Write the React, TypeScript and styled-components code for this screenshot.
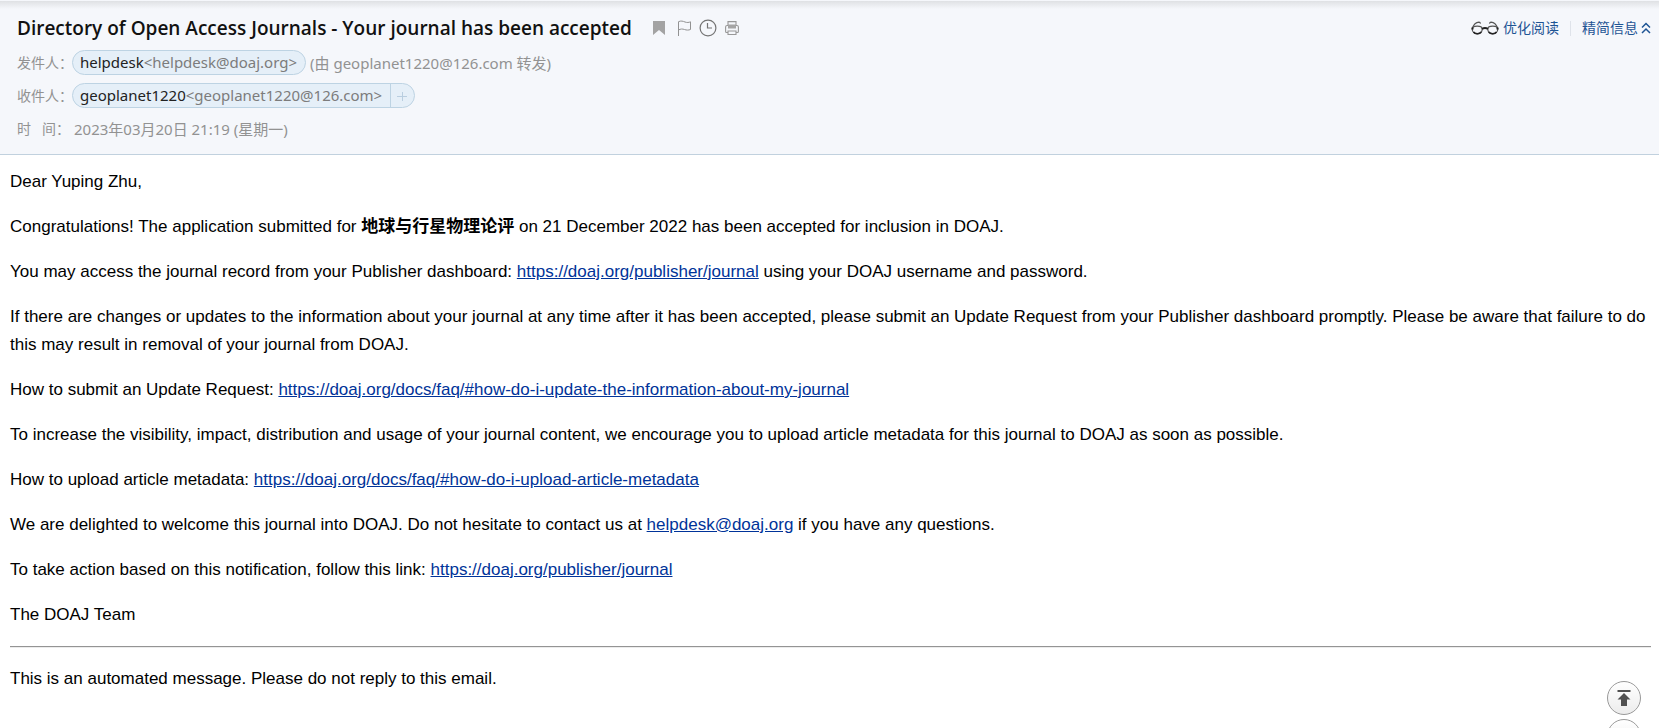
import React from "react";
import styled, { createGlobalStyle } from "styled-components";

const uiFont = `"Noto Sans", "Noto Sans CJK SC", sans-serif`;

const GlobalStyle = createGlobalStyle`
  body {
    margin: 0;
    background: #fff;
    overflow: hidden;
  }
  * {
    box-sizing: border-box;
  }
`;

const Header = styled.header`
  display: flex;
  flex-direction: column;
  align-items: flex-start;
  gap: 8px;
  padding: 15px 8px 13px 17px;
  background: #f5f7fb linear-gradient(#dfe1e4, #f5f7fb) 0 1px / 100% 8px no-repeat;
  border-bottom: 1px solid #c1d1de;
  color: #929292;
  font: 14px/24px ${uiFont};
`;

const TitleBar = styled.div`
  display: flex;
  align-items: center;
  align-self: stretch;
  height: 26px;
  margin-bottom: 1px;
`;

const Subject = styled.h1`
  margin: 0 20px 0 0;
  color: #111;
  font-family: "Open Sans", "Noto Sans CJK SC", sans-serif;
  font-size: 19px;
  font-weight: 600;
  line-height: 24px;
  white-space: nowrap;
`;

const IconButton = styled.button`
  display: flex;
  padding: 0;
  border: 0;
  background: none;
  color: #a3a3a3;
  cursor: pointer;
`;

const Marks = styled.div`
  display: flex;
  align-items: center;
  gap: 7px;
`;

const ViewLinks = styled.nav`
  display: flex;
  align-items: center;
  gap: 11px;
  margin-left: auto;
`;

const ViewLink = styled.a`
  display: flex;
  align-items: center;
  gap: 4px;
  color: #1e5494;
  text-decoration: none;
  white-space: nowrap;
`;

const CollapseLink = styled(ViewLink)`
  gap: 3px;
`;

const Divider = styled.span`
  width: 1px;
  height: 15px;
  background: #dfe3ea;
`;

const Field = styled.div`
  display: flex;
  align-items: center;
  height: 25px;
  font-size: 15px;
  line-height: 22px;
`;

const FieldLabel = styled.span`
  width: 55px;
  font-size: 14px;
  white-space: pre;
`;

const Note = styled.span`
  margin-left: 4px;
`;

const FieldValue = styled.span`
  margin-left: 2px;
`;

const Chip = styled.span`
  display: flex;
  height: 25px;
  overflow: hidden;
  border: 1px solid #bdd3e3;
  border-radius: 13px;
  background: #e5eff8;
  color: #7c7c7c;
`;

const Address = styled.span`
  padding: 0 8px 0 7px;
`;

const Person = styled.span`
  color: #222;
`;

const AddButton = styled.button`
  display: flex;
  align-items: center;
  width: 24px;
  padding: 0 0 0 6px;
  border: 0;
  border-left: 1px solid #bdd3e3;
  background: none;
  color: #b9cee0;
  cursor: pointer;
`;

const Message = styled.main`
  display: flex;
  flex-direction: column;
  gap: 17px;
  padding: 13px 8px 38px 10px;
  color: #000;
  font: 17px/28px "Liberation Sans", "Noto Sans CJK SC", sans-serif;
`;

const Paragraph = styled.p`
  margin: 0;
`;

const TextLink = styled.a`
  color: #003399;
`;

const Rule = styled.hr`
  width: 100%;
  height: 2px;
  margin: 0;
  border: 0;
  border-top: 1px solid #949494;
  border-bottom: 1px solid #ececec;
`;

const FloatingTools = styled.div`
  position: fixed;
  right: 18px;
  bottom: -25px;
  display: flex;
  flex-direction: column;
  gap: 4px;
`;

const RoundButton = styled.button`
  display: flex;
  align-items: center;
  justify-content: center;
  width: 34px;
  height: 34px;
  padding: 0;
  border: 1px solid #999;
  border-radius: 50%;
  background: linear-gradient(#fff, #ececec);
  color: #505050;
  cursor: pointer;
`;

const BookmarkIcon = () => (
  <svg width="18" height="18" viewBox="0 0 18 18" fill="currentColor">
    <path d="M1 2h12v14l-6-5-6 5z" />
  </svg>
);

const FlagIcon = () => (
  <svg width="15" height="18" viewBox="0 0 15 18" fill="none" stroke="#929292">
    <path d="M1.500 17V2.700C4 1.500 6 2.200 8 3c2 .8 4 .5 5.500-.2v7.700c-2 .8-4 .7-6 0s-4-.7-6 .5" />
  </svg>
);

const ClockIcon = () => (
  <svg width="18" height="18" viewBox="0 0 18 18" fill="none" stroke="#747474" strokeWidth="1.200">
    <circle cx="9" cy="9" r="7.900" />
    <path d="M8.500 4v5H13" />
  </svg>
);

const PrinterIcon = () => (
  <svg width="16" height="18" viewBox="0 0 16 18" fill="none" stroke="#989898" strokeWidth="1.100">
    <path d="M4 6V2.600h8V6M4 13.500H2.600c-.6 0-1-.4-1-1V8c0-1 .6-1.500 1.500-1.500h9.800c1 0 1.500.5 1.500 1.500v4.500c0 .6-.4 1-1 1H12" />
    <path d="M4 5.500h8v4H4z" fill="#a5a5a5" stroke="none" />
    <path d="M4 12h8v3.500H4z" />
  </svg>
);

const GlassesIcon = () => (
  <svg width="28" height="14" viewBox="0 0 28 14" fill="none" stroke="#555" strokeWidth="1.200">
    <path d="M1.500 7C2.500 4 5 1.500 8 1.200c1 0 1.300.5 1.500 1.500M26.500 7C25.500 4 23 1.500 20 1.200c-1 0-1.300.5-1.500 1.500" />
    <path d="M1.200 8c0-2.200 2-2.800 5-2.800s5 .8 5 2.800c0 3-2 4.800-4.800 4.800S1.200 11 1.200 8zM26.800 8c0-2.200-2-2.800-5-2.800s-5 .8-5 2.800c0 3 2 4.800 4.800 4.800S26.800 11 26.800 8z" />
    <path d="M.5 7.500h2M11 8c2-1.300 4-1.300 6 0M25.500 7.500h2" stroke="#222" strokeWidth="2" />
    <path d="M2.500 11c1.500 2.200 6 2.200 7.700 0M17.800 11c1.700 2.200 6.200 2.200 7.700 0" stroke="#222" strokeWidth="1.500" />
  </svg>
);

const CollapseIcon = () => (
  <svg width="10" height="12" viewBox="0 0 10 12" fill="none" stroke="currentColor" strokeWidth="1.500">
    <path d="M1 5.500l4-4 4 4M1 11l4-4 4 4" />
  </svg>
);

const PlusIcon = () => (
  <svg width="10" height="10" viewBox="0 0 10 10" stroke="currentColor">
    <path d="M0 5.500h10M5.500 1v9" />
  </svg>
);

const TopIcon = () => (
  <svg width="14" height="16" viewBox="0 0 14 16" fill="currentColor">
    <path d="M.5 0h13v2H.5zM7 3l6.500 6.500H10V16H4V9.500H.5z" />
  </svg>
);

export default function App() {
  return (
    <>
      <GlobalStyle />
      <Header>
        <TitleBar>
          <Subject>Directory of Open Access Journals - Your journal has been accepted</Subject>
          <Marks>
            <IconButton aria-label="书签"><BookmarkIcon /></IconButton>
            <IconButton aria-label="标记"><FlagIcon /></IconButton>
            <IconButton aria-label="待办"><ClockIcon /></IconButton>
            <IconButton aria-label="打印"><PrinterIcon /></IconButton>
          </Marks>
          <ViewLinks>
            <ViewLink href="#read"><GlassesIcon />优化阅读</ViewLink>
            <Divider />
            <CollapseLink href="#brief">精简信息<CollapseIcon /></CollapseLink>
          </ViewLinks>
        </TitleBar>
        <Field>
          <FieldLabel>发件人：</FieldLabel>
          <Chip>
            <Address><Person>helpdesk</Person>&lt;helpdesk@doaj.org&gt;</Address>
          </Chip>
          <Note>(由 geoplanet1220@126.com 转发)</Note>
        </Field>
        <Field>
          <FieldLabel>收件人：</FieldLabel>
          <Chip>
            <Address><Person>geoplanet1220</Person>&lt;geoplanet1220@126.com&gt;</Address>
            <AddButton aria-label="添加联系人"><PlusIcon /></AddButton>
          </Chip>
        </Field>
        <Field>
          <FieldLabel>时{"   "}间：</FieldLabel>
          <FieldValue>2023年03月20日 21:19 (星期一)</FieldValue>
        </Field>
      </Header>
      <Message>
        <Paragraph>Dear Yuping Zhu,</Paragraph>
        <Paragraph>
          Congratulations! The application submitted for <b>地球与行星物理论评</b> on 21 December 2022 has been
          accepted for inclusion in DOAJ.
        </Paragraph>
        <Paragraph>
          You may access the journal record from your Publisher dashboard:{" "}
          <TextLink href="#journal">https://doaj.org/publisher/journal</TextLink> using your DOAJ username and
          password.
        </Paragraph>
        <Paragraph>
          If there are changes or updates to the information about your journal at any time after it has been
          accepted, please submit an Update Request from your Publisher dashboard promptly. Please be aware that
          failure to do this may result in removal of your journal from DOAJ.
        </Paragraph>
        <Paragraph>
          How to submit an Update Request:{" "}
          <TextLink href="#update">https://doaj.org/docs/faq/#how-do-i-update-the-information-about-my-journal</TextLink>
        </Paragraph>
        <Paragraph>
          To increase the visibility, impact, distribution and usage of your journal content, we encourage you to
          upload article metadata for this journal to DOAJ as soon as possible.
        </Paragraph>
        <Paragraph>
          How to upload article metadata:{" "}
          <TextLink href="#metadata">https://doaj.org/docs/faq/#how-do-i-upload-article-metadata</TextLink>
        </Paragraph>
        <Paragraph>
          We are delighted to welcome this journal into DOAJ. Do not hesitate to contact us at{" "}
          <TextLink href="#helpdesk">helpdesk@doaj.org</TextLink> if you have any questions.
        </Paragraph>
        <Paragraph>
          To take action based on this notification, follow this link:{" "}
          <TextLink href="#publisher">https://doaj.org/publisher/journal</TextLink>
        </Paragraph>
        <Paragraph>The DOAJ Team</Paragraph>
        <Rule />
        <Paragraph>This is an automated message. Please do not reply to this email.</Paragraph>
      </Message>
      <FloatingTools>
        <RoundButton aria-label="回到顶部"><TopIcon /></RoundButton>
        <RoundButton aria-label="到底部" />
      </FloatingTools>
    </>
  );
}
